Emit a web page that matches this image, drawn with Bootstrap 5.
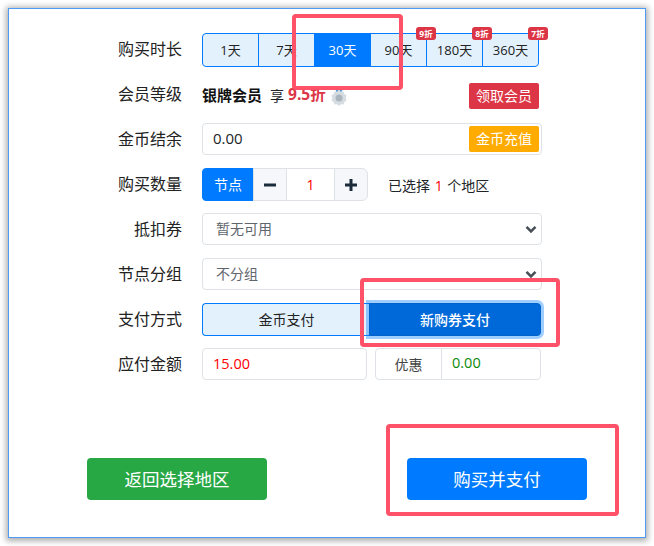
<!doctype html>
<html lang="zh-CN">
<head>
<meta charset="utf-8">
<title>购买</title>
<link href="https://cdn.jsdelivr.net/npm/bootstrap@5.3.0/dist/css/bootstrap.min.css" rel="stylesheet">
<style>
html,body{height:100%;background:#fff;overflow:hidden}
body{font-family:"Open Sans","Noto Sans CJK SC",sans-serif;color:#212529;padding:8px}
.win{width:638px;height:530px;border:1px solid #4d9bf5;box-shadow:0 1px 6px 2px rgba(0,0,0,.32);background:#fff;position:relative;padding-top:24px}
.frow{height:34px;margin-bottom:11px}
.flabel{width:173px;text-align:right;font-size:16px;line-height:32px;margin-right:20px;flex:none;color:#222}
.fbody{width:340px;flex:none}
.tabs{width:337px;height:34px}
.tabs .btn.tabitem{flex:1 1 0;padding:0;font-size:13px;line-height:32px;border:1px solid #007bff;background:#e3f1fd;color:#222;border-radius:0}
.tabs .btn.tabitem:first-child{border-radius:4px 0 0 4px}
.tabs .btn.tabitem:last-child{border-radius:0 4px 4px 0}
.tabs .btn.tabitem.active{background:#007bff;color:#fff}
.btn .badge.disc{top:-7px;right:-10px;width:20px;height:13px;padding:0;background:#dc3545;border-radius:3px;font-size:8.5px;font-weight:700;line-height:13px;z-index:2;color:#fff}
.memb{font-size:14px;height:34px;color:#212529}
.memb b{color:#111;font-size:15px;font-weight:700}
.rate{color:#dc3545;font-weight:700;font-size:15.5px;margin-left:4px}
.memb svg{margin-left:4px;margin-top:4px}
.btn.getvip{margin-left:auto;margin-right:3px;background:#dc3545;color:#fff;font-size:14px;line-height:26px;height:26px;width:70px;padding:0;border:0;border-radius:2px;margin-top:2px}
.coin{height:32px;font-size:15px;padding:0 10px 2px;line-height:28px;color:#212529;border-radius:4px}
.btn.recharge{position:absolute;right:3px;top:3px;width:70px;height:26px;padding:0;border:0;background:#ffab00;color:#fff;font-size:14px;line-height:26px;border-radius:2px;z-index:5}
.qty{height:33px;width:auto;flex-wrap:nowrap}
.qty .input-group-text{width:52px;background:#007bff;border-color:#007bff;color:#fff;justify-content:center;font-size:14px;padding:0;border-radius:4px 0 0 4px}
.qty .btn{width:34px;padding:0;background:#f5f7fa;border:1px solid #dee2e6;display:flex;align-items:center;justify-content:center}
.qty .qtyval{flex:0 0 49px;width:49px;padding:0;text-align:center;color:#f00;font-size:14px;border-color:#dee2e6;border-radius:0}
.qtynote{margin-left:20px;font-size:14px;line-height:35px;color:#212529;white-space:nowrap;word-spacing:1px}
.qtynote span{color:#f00}
.form-select.sel{height:32px;font-size:14px;color:#5f666d;padding:0 36px 2px 13px;border-radius:4px;background-position:right 4px center;background-size:12px 9px;background-image:url("data:image/svg+xml,%3csvg xmlns='http://www.w3.org/2000/svg' viewBox='0 0 16 12'%3e%3cpath fill='none' stroke='%23495057' stroke-width='3.5' d='M2 2.500l6 6 6-6'/%3e%3c/svg%3e")}
.pay{height:33px;width:339px}
.pay .btn{padding:0;font-size:14px;line-height:31px;border-radius:0}
.pay .btn.payleft{flex:0 0 168px;background:#e3f1fd;border:1px solid #007bff;border-right:0;color:#222;border-radius:4px 0 0 4px}
.pay .btn.payright{flex:1;background:#0069d9;border:1px solid #0062cc;color:#fff;font-weight:500;border-radius:0 4px 4px 0;box-shadow:0 0 0 3px rgba(0,123,255,.38);z-index:3}
.amt1{width:165px;height:32px;flex:none;padding:0 10px 2px;color:#f00;font-size:14.5px;border-radius:4px}
.amtgrp{width:166px;margin-left:8px;height:32px;flex-wrap:nowrap}
.amtgrp .input-group-text{width:67px;justify-content:center;background:#fff;font-size:14px;color:#444;padding:0;border-radius:4px 0 0 4px}
.amtgrp .form-control{padding:0 10px 2px;color:#0a8a0a;font-size:14.5px;border-radius:0 4px 4px 0}
.acts{margin-top:76px;padding-left:78px}
.btn.actbtn{width:180px;height:42px;padding:0;border:0;border-radius:4px;color:#fff;font-size:17.5px;line-height:42px}
.btn.green{background:#28a745}
.btn.blue{background:#007bff;margin-left:140px}
.mark1,.mark2,.mark3{position:absolute;border:4px solid #ff5168;border-radius:4px;z-index:6}
.mark1{left:283px;top:5px;width:111px;height:76px}
.mark2{left:351px;top:269px;width:200px;height:69px}
.mark3{left:377px;top:415px;width:233px;height:92px}
</style>
</head>
<body>
<div class="win">
  <div class="frow d-flex align-items-start"><div class="flabel">购买时长</div><div class="fbody"><div class="btn-group tabs" role="group">
    <button type="button" class="btn tabitem">1天</button><button type="button" class="btn tabitem">7天</button><button type="button" class="btn tabitem active">30天</button>
    <button type="button" class="btn tabitem">90天<span class="badge disc position-absolute">9折</span></button><button type="button" class="btn tabitem">180天<span class="badge disc position-absolute">8折</span></button><button type="button" class="btn tabitem">360天<span class="badge disc position-absolute">7折</span></button>
  </div></div></div>
  <div class="frow d-flex align-items-start"><div class="flabel">会员等级</div><div class="fbody"><div class="memb d-flex align-items-center"><b>银牌会员</b><span class="ms-2">享</span><span class="rate">9.5折</span>
    <svg width="18" height="20" viewBox="0 0 18 20"><path d="M5 1h3l1 5-2 1zM13 1h-3L9 6l2 1z" fill="#5b9bd5"/><path d="M9 3l2 1.800 2.600-.3.800 2.500 2.200 1.400-.9 2.600.9 2.600-2.200 1.400-.8 2.500-2.600-.3L9 19l-2-1.800-2.600.3-.8-2.500-2.200-1.400.9-2.600-.9-2.600 2.200-1.400.8-2.500 2.600.3z" fill="#d5dde3"/><circle cx="9" cy="11" r="3.500" fill="#aab4bc"/></svg>
    <button type="button" class="btn getvip">领取会员</button></div></div></div>
  <div class="frow d-flex align-items-start"><div class="flabel">金币结余</div><div class="fbody position-relative"><input class="form-control coin" value="0.00" readonly><button type="button" class="btn recharge">金币充值</button></div></div>
  <div class="frow d-flex align-items-start"><div class="flabel">购买数量</div><div class="fbody d-flex"><div class="input-group qty"><span class="input-group-text">节点</span><button type="button" class="btn" aria-label="减少"><svg width="12" height="12" viewBox="0 0 12 12"><rect x="0" y="4.500" width="12" height="3" fill="#1c2b3a"/></svg></button><input class="form-control qtyval" value="1"><button type="button" class="btn" aria-label="增加"><svg width="12" height="12" viewBox="0 0 12 12"><path d="M0 4.500h4.500V0h3v4.500H12v3H7.500V12h-3V7.500H0z" fill="#1c2b3a"/></svg></button></div><div class="qtynote">已选择 <span>1</span> 个地区</div></div></div>
  <div class="frow d-flex align-items-start"><div class="flabel">抵扣券</div><div class="fbody"><select class="form-select sel"><option>暂无可用</option></select></div></div>
  <div class="frow d-flex align-items-start"><div class="flabel">节点分组</div><div class="fbody"><select class="form-select sel"><option>不分组</option></select></div></div>
  <div class="frow d-flex align-items-start"><div class="flabel">支付方式</div><div class="fbody"><div class="btn-group pay" role="group"><button type="button" class="btn payleft">金币支付</button><button type="button" class="btn payright">新购券支付</button></div></div></div>
  <div class="frow d-flex align-items-start"><div class="flabel">应付金额</div><div class="fbody d-flex"><input class="form-control amt1" value="15.00" readonly><div class="input-group amtgrp"><span class="input-group-text">优惠</span><input class="form-control" value="0.00" readonly></div></div></div>
  <div class="acts d-flex"><button type="button" class="btn actbtn green">返回选择地区</button><button type="button" class="btn actbtn blue">购买并支付</button></div>
  <div class="mark1"></div><div class="mark2"></div><div class="mark3"></div>
</div>
<script src="https://cdn.jsdelivr.net/npm/bootstrap@5.3.0/dist/js/bootstrap.bundle.min.js"></script>
</body>
</html>
